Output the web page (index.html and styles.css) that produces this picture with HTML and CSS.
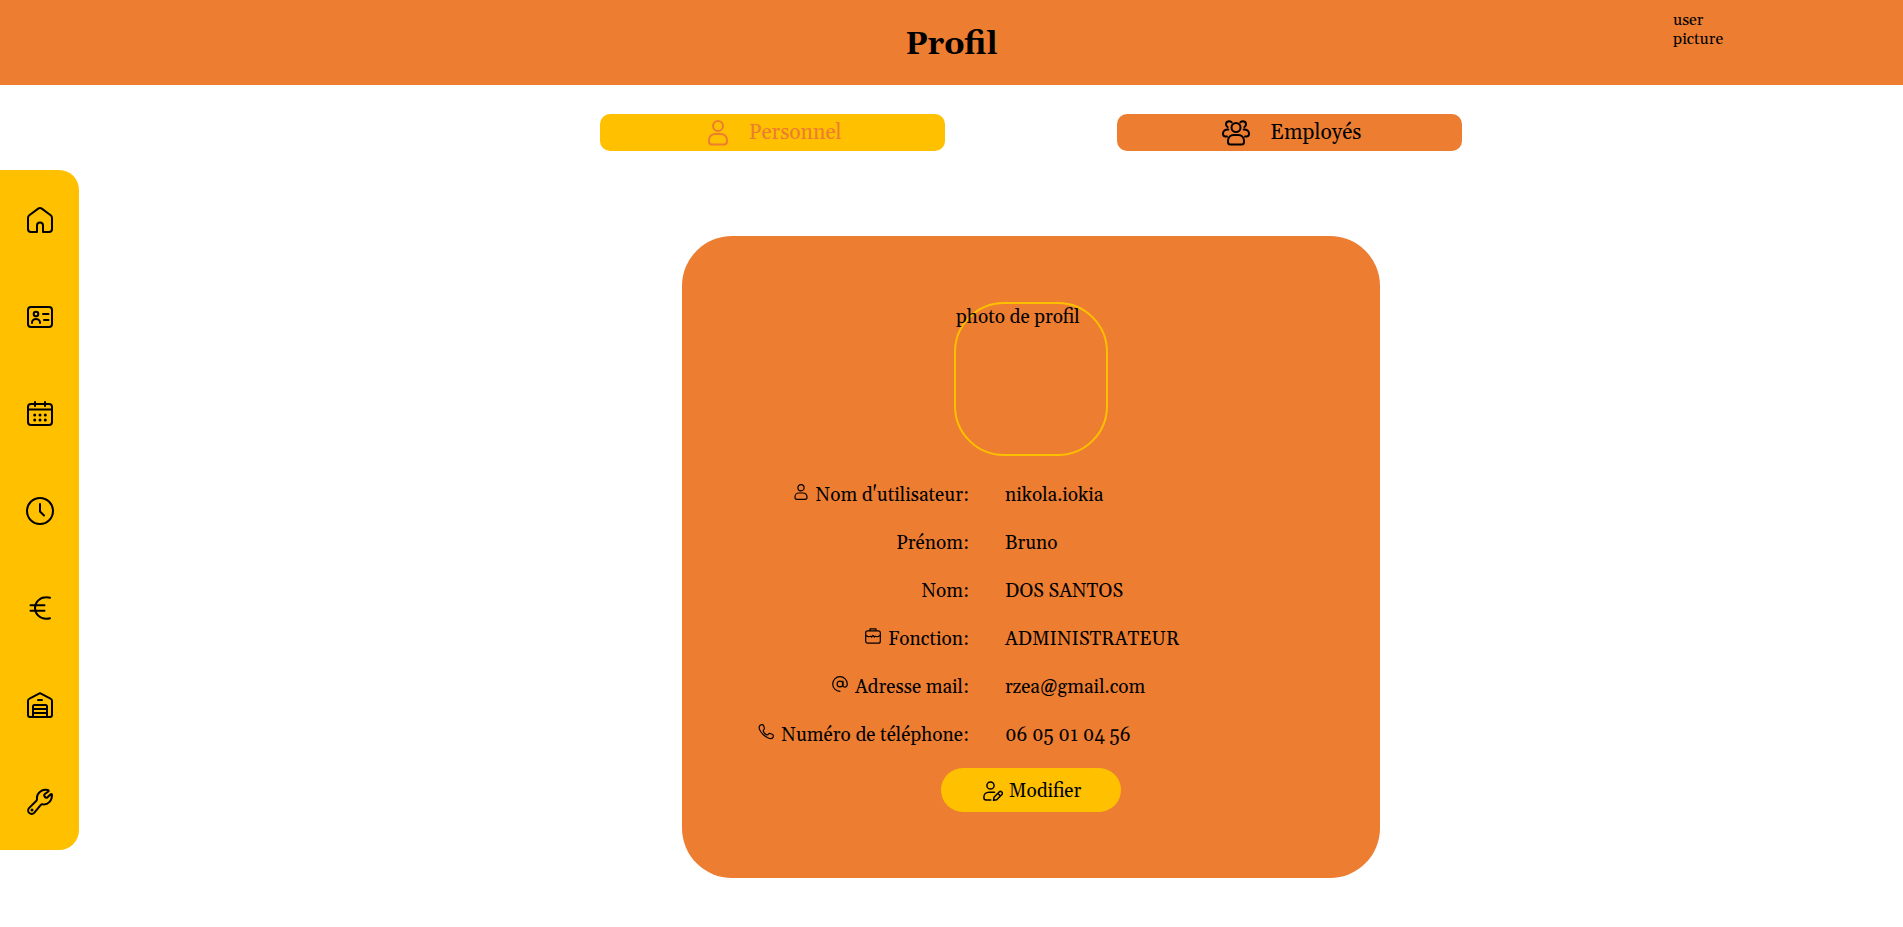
FILE: index.html
```html
<!DOCTYPE html>
<html lang="fr">
<head>
<meta charset="utf-8">
<meta name="viewport" content="width=device-width, initial-scale=1">
<title>Profil</title>
<link rel="stylesheet" href="styles.css">
</head>
<body>
<header class="topbar">
  <h1 class="title">Profil</h1>
  <a class="user" href="#">user picture</a>
</header>
<div class="layout">
  <nav class="sidebar" aria-label="Navigation">
    <a href="#" aria-label="Accueil"><svg class="icon" viewBox="0 0 28 28"><path d="M11 26H5a3 3 0 0 1-3-3V12a3.500 3.500 0 0 1 1.300-2.700l8.900-6.700a3 3 0 0 1 3.600 0l8.900 6.700A3.500 3.500 0 0 1 26 12v11a3 3 0 0 1-3 3h-6v-6.500a3 3 0 0 0-6 0z"/></svg></a>
    <a href="#" aria-label="Identité"><svg class="icon" viewBox="0 0 28 28"><rect x="2" y="4" width="24" height="20" rx="3"/><circle cx="10" cy="11" r="2.300"/><path d="M6 20v-.5a4 3.500 0 0 1 8 0v.5M17 11h5.500M18 17h4.500"/></svg></a>
    <a href="#" aria-label="Calendrier"><svg class="icon" viewBox="0 0 28 28"><rect x="2" y="4" width="24" height="21" rx="3"/><path d="M2 9.500h24M9 2v4M19 2v4"/><path class="dots" d="M8.700 15h.01M14 15h.01M19.300 15h.01M8.700 20h.01M14 20h.01M19.300 20h.01"/></svg></a>
    <a href="#" aria-label="Horaires"><svg class="icon" viewBox="0 0 28 28"><circle cx="14" cy="14" r="13"/><path d="M14 7v7.500l4 4"/></svg></a>
    <a href="#" aria-label="Finances"><svg class="icon" viewBox="0 0 28 28"><path d="M24 3.700a13 13 0 0 0-4-.5c-6 0-11 4.800-11 10.800s5 10.800 11 10.800a13 13 0 0 0 4-.5M4.500 11.300h14M4.500 16.700h14"/></svg></a>
    <a href="#" aria-label="Entrepôt"><svg class="icon" viewBox="0 0 28 28"><path d="M14 2.200l10.500 5.400A2.500 2.500 0 0 1 26 9.800V24a2 2 0 0 1-2 2H4a2 2 0 0 1-2-2V9.800a2.500 2.500 0 0 1 1.500-2.200zM7 26V15.500a1.500 1.500 0 0 1 1.500-1.500h11a1.500 1.500 0 0 1 1.500 1.500V26M7 18h14M7 22h14M12 9h4"/></svg></a>
    <a href="#" aria-label="Maintenance"><svg class="icon" viewBox="0 0 28 28"><path d="M21.800 2c1 .3 1.100 1 .5 1.500L18.800 6c-1.500 1.300.5 4.500 2.500 3.500l3.400-3.200c.7-.6 1.300-.2 1.300.7 0 6-4 10-9.500 9.300-.7-.1-1.200.1-1.700.6L8.200 24.900a3.500 3.500 0 0 1-5-5l7.200-7.200c.5-.5.700-1 .6-1.700C10.300 5.400 15.500.7 21.800 2z"/><path class="dots" d="M6 22h.01"/></svg></a>
  </nav>
  <main class="content">
    <div class="tabs">
      <button class="tab tab-active" type="button"><svg class="tab-icon" viewBox="0 0 22 26"><circle cx="11" cy="6" r="5"/><path d="M8 14h6a6 6 0 0 1 6 6v1.500a3 3 0 0 1-3 3H5a3 3 0 0 1-3-3V20a6 6 0 0 1 6-6z"/></svg>Personnel</button>
      <button class="tab" type="button"><svg class="tab-icon tab-icon-wide" viewBox="0 0 28 26"><circle cx="14" cy="7.500" r="4.500"/><path d="M11.500 15h5a5.500 5.500 0 0 1 5.500 5.500V22a2.500 2.500 0 0 1-2.500 2.500h-11A2.500 2.500 0 0 1 6 22v-1.500a5.500 5.500 0 0 1 5.500-5.500zM9.600 2.300C7.500.5 4 1.300 4 4.300c0 1.200.5 2.200 1.600 2.800M6.300 9.500C3 9.300 1 11.200 1 13.700c0 1.700.7 2.700 2.500 2.700H5M18.400 2.300C20.500.5 24 1.300 24 4.300c0 1.200-.5 2.200-1.600 2.800M21.700 9.500c3.300-.2 5.300 1.700 5.300 4.200 0 1.700-.7 2.700-2.500 2.700H23"/></svg>Employés</button>
    </div>
    <section class="card">
      <div class="photo">photo de profil</div>
      <dl class="details">
        <dt><svg class="small-icon" viewBox="0 0 16 16"><circle cx="8" cy="3.700" r="3.100"/><path d="M5.800 9h4.400A3.800 3.800 0 0 1 14 12.800v.7a1.800 1.800 0 0 1-1.800 1.800H3.800A1.800 1.800 0 0 1 2 13.500v-.7A3.800 3.800 0 0 1 5.800 9z"/></svg>Nom d'utilisateur:</dt><dd>nikola.iokia</dd>
        <dt>Prénom:</dt><dd>Bruno</dd>
        <dt>Nom:</dt><dd>DOS SANTOS</dd>
        <dt><svg class="small-icon" viewBox="0 0 16 16"><rect x=".7" y="2.800" width="14.600" height="12.400" rx="2"/><path d="M5 2.500V.8h6v1.700M1 7.500c1.500 1.400 3.300 1.500 5 .8M15 7.500c-1.500 1.400-3.300 1.500-5 .8M6.500 9l1.500-1.500L9.500 9"/></svg>Fonction:</dt><dd>ADMINISTRATEUR</dd>
        <dt><svg class="small-icon" viewBox="0 0 16 16"><circle cx="8" cy="8" r="2.900"/><path d="M10.900 5v4.200c0 1.700 1.200 2 2.200 1.900 1.700-.2 2.200-1.600 2.200-3.100a7.300 7.300 0 1 0-7.300 7.300"/></svg>Adresse mail:</dt><dd>rzea@gmail.com</dd>
        <dt><svg class="small-icon" viewBox="0 0 16 16"><path d="M2.200 1.200C4 .2 5.200.6 5.700 2l.7 1.900c.6 1.500-1.500 1.800-1.200 3C5.600 8.500 7.500 10.400 9 10.800c1.300.4 1.600-1.800 3-1.300l2.200.8c1.400.6 1.500 2 .6 3.400C11.500 18.300-2.800 5.500 2.200 1.200z"/></svg>Numéro de téléphone:</dt><dd>06 05 01 04 56</dd>
      </dl>
      <button class="edit" type="button"><svg class="edit-icon" viewBox="0 0 20 20"><circle cx="7.500" cy="4.500" r="3.600"/><path d="M11.500 11.200H6C3 11.200.9 13.200.9 16v.7A2.300 2.300 0 0 0 3.200 19h4.600M10.500 19.300l.5-3.100 5.200-5.200c1.600-1.600 4.300.7 2.700 2.500l-5.200 5.200zM15 12.500l2.500 2.500"/></svg>Modifier</button>
    </section>
  </main>
</div>
</body>
</html>
```
FILE: styles.css
```css
* { box-sizing: border-box; }
body {
  margin: 0;
  background: #fff;
  color: #000;
  font-family: Georgia, Gelasio, "Liberation Serif", serif;
  font-size: 19px;
  line-height: 24px;
}
a { color: inherit; text-decoration: none; }
button { border: 0; color: inherit; font: inherit; cursor: pointer; }
svg { fill: none; stroke: currentColor; stroke-linecap: round; stroke-linejoin: round; flex: none; }

.topbar {
  display: grid;
  grid-template-columns: 1fr auto 1fr;
  min-height: 85px;
  background: #ed7d31;
}
.title { grid-column: 2; align-self: center; margin: 0; padding-top: 4px; font-size: 32px; line-height: 40px; }
.user { justify-self: end; width: 50px; margin: 11px 180px 0 0; font-size: 16px; line-height: 19px; }

.layout { display: flex; align-items: flex-start; }
.sidebar {
  display: grid;
  grid-auto-rows: 97px;
  flex: none;
  width: 79px;
  margin-top: 85px;
  padding-top: 1px;
  background: #ffc000;
  border-radius: 0 20px 20px 0;
}
.sidebar a { display: flex; align-items: center; justify-content: center; }
.icon { width: 28px; height: 28px; stroke-width: 2; }
.dots { stroke-width: 3; }

.content { flex: 1; margin: 29px 9px 0 89px; }
.tabs { display: flex; justify-content: center; gap: 10%; }
.tab {
  display: flex;
  align-items: center;
  justify-content: center;
  gap: 20px;
  width: 20%;
  min-height: 37px;
  padding: 0 0 0 4px;
  background: #ed7d31;
  border-radius: 10px;
  font-size: 21px;
}
.tab-active { background: #ffc000; color: #ed7d31; }
.tab-icon { width: 22px; height: 26px; stroke-width: 2; }
.tab-icon-wide { width: 28px; }

.card {
  display: flex;
  flex-direction: column;
  align-items: center;
  width: calc(40% + 8px);
  margin: 85px auto 0;
  padding: 66px 0;
  background: #ed7d31;
  border-radius: 50px;
}
.photo {
  width: 154px;
  height: 154px;
  padding-top: 1px;
  border: 2px solid #ffc000;
  border-radius: 50px;
}
.details {
  display: grid;
  grid-template-columns: 287fr 375fr;
  grid-auto-rows: 48px;
  align-items: center;
  column-gap: 36px;
  width: 100%;
  margin: 15px 0 9px;
}
.details dt { display: flex; justify-content: flex-end; gap: 7px; white-space: nowrap; }
.details dd { margin: 0; }
.small-icon { width: 16px; height: 16px; margin-top: 1px; stroke-width: 1.2; }
.edit {
  display: flex;
  align-items: center;
  justify-content: center;
  gap: 6px;
  min-height: 44px;
  padding: 1px 40px 0 42px;
  background: #ffc000;
  border-radius: 22px;
}
.edit-icon { width: 20px; height: 20px; stroke-width: 1.5; }
```
